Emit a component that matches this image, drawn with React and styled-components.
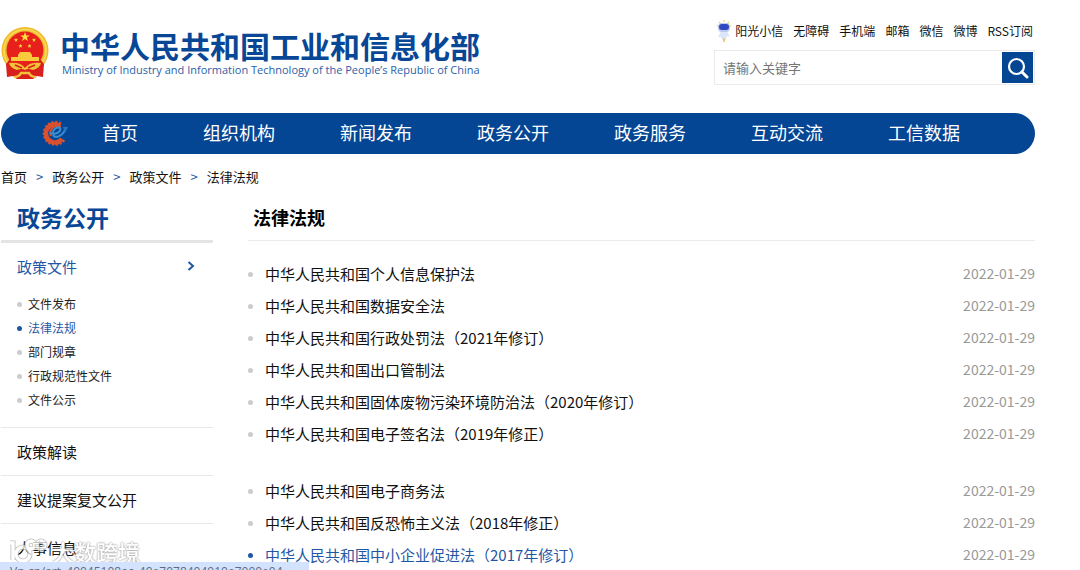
import React from 'react'
import styled, { createGlobalStyle } from 'styled-components';


const topLinks = ['无障碍', '手机端', '邮箱', '微信', '微博', 'RSS订阅'];
const navItems = ['首页', '组织机构', '新闻发布', '政务公开', '政务服务', '互动交流', '工信数据'];
const crumbs = ['首页', '政务公开', '政策文件', '法律法规'];
const subMenu = ['文件发布', '法律法规', '部门规章', '行政规范性文件', '文件公示'];
const sideMenu = ['政策解读', '建议提案复文公开', '人事信息'];

const lawGroups = [
    [
        '中华人民共和国个人信息保护法',
        '中华人民共和国数据安全法',
        '中华人民共和国行政处罚法（2021年修订）',
        '中华人民共和国出口管制法',
        '中华人民共和国固体废物污染环境防治法（2020年修订）',
        '中华人民共和国电子签名法（2019年修正）',
    ],
    [
        '中华人民共和国电子商务法',
        '中华人民共和国反恐怖主义法（2018年修正）',
        '中华人民共和国中小企业促进法（2017年修订）',
    ],
];
const activeLaw = '中华人民共和国中小企业促进法（2017年修订）';

const star = (cx, cy, r) => {
    const pts = [];
    for (let i = 0; i < 10; i++) {
        const a = (Math.PI / 5) * i - Math.PI / 2;
        const d = i % 2 ? r * 0.4 : r;
        pts.push(`${cx + d * Math.cos(a)},${cy + d * Math.sin(a)}`);
    }
    return pts.join(' ');
};

const Emblem = () => (
    <svg width="48" height="53" viewBox="0 0 48 53" aria-hidden="true">
        <circle cx="24" cy="23.5" r="23.5" fill="#eebb2c" />
        <circle cx="24" cy="23.5" r="21" fill="none" stroke="#f8d654" strokeWidth="2" />
        <path d="M5 37 L9 32 H39 L43 37 L42 50 L36 49 L32 52 H16 L12 49 L6 50 Z" fill="#d8201c" />
        <circle cx="24" cy="23" r="18.5" fill="#e8201c" />
        <polygon points={star(24, 10, 5)} fill="#ffdf3d" />
        <polygon points={star(15, 13, 2.2)} fill="#ffdf3d" />
        <polygon points={star(33, 13, 2.2)} fill="#ffdf3d" />
        <polygon points={star(19.5, 19, 2.2)} fill="#ffdf3d" />
        <polygon points={star(28.5, 19, 2.2)} fill="#ffdf3d" />
        <path d="M17 28 L19 25 H29 L31 28 V30 H38 V34 H10 V30 H17 Z" fill="#f7cb3c" />
        <path d="M8 36 Q20 35 24 41 Q28 35 40 36 Q39 41 32 43 Q27 41 24 43 Q21 41 16 43 Q9 41 8 36 Z" fill="#f4c238" />
        <path d="M14 38 L21 41 M34 38 L27 41" stroke="#d8201c" strokeWidth="1.6" />
        <path d="M13 50 Q18 50 20 46 H28 Q30 50 35 50" fill="none" stroke="#f4c238" strokeWidth="2.4" />
    </svg>
);

const GearLogo = () => (
    <svg width="28" height="28" viewBox="0 0 28 28" aria-hidden="true">
        <path d="M23 21 A11 11 0 1 1 20 5" fill="none" stroke="#d9502f" strokeWidth="3" strokeDasharray="2.2 1.5" />
        <path d="M21 20 A9 9 0 1 1 19 7" fill="none" stroke="#d9502f" strokeWidth="4.5" />
        <path d="M20 8 C14 4 7 11 10 17" fill="none" stroke="#d9502f" strokeWidth="2" />
        <path d="M9 14 C14 16 21 13 19 9 C16 7 11 11 12 15 C13 21 23 17 25 8" fill="none" stroke="#3a8ed0" strokeWidth="2" />
        <path d="M22 8 L27 8 L24 14 Z" fill="#2674c4" />
    </svg>
);

const Robot = () => (
    <svg width="14" height="22" viewBox="0 0 14 22" aria-hidden="true">
        <path d="M2 2 L4 4 M7 0 V2 M12 2 L10 4 M0 6 H2 M12 6 H14" stroke="#f5d778" strokeWidth="1.4" />
        <path d="M4 11 H10 L13 17 L10 16 L9 20 H5 L4 17 L1 17 Z" fill="#dbe6f8" />
        <rect x="1" y="3" width="12" height="9" rx="4" fill="#b9c8f2" />
        <rect x="2" y="4" width="10" height="6" rx="3" fill="#3048c0" />
        <path d="M7 18 V22" stroke="#f3c988" strokeWidth="2" />
    </svg>
);

const WatermarkLogo = () => (
    <svg width="40" height="26" viewBox="0 0 40 26" fill="none" aria-hidden="true">
        <g stroke="#a8a8a8" strokeWidth="5">
            <path d="M2 5 H5 V22" />
            <circle cx="15" cy="16" r="7" />
            <circle cx="23" cy="7" r="4" />
            <circle cx="33" cy="7" r="4" />
        </g>
        <g stroke="#fff" strokeWidth="3.4">
            <path d="M2 5 H5 V22" />
            <circle cx="15" cy="16" r="7" />
            <circle cx="23" cy="7" r="4" />
            <circle cx="33" cy="7" r="4" />
        </g>
    </svg>
);


const App = () => {

    return (
        <>
            <GlobalStyle />
            <PageLayout>
                <HeaderLayout>
                    <Brand href="#">
                        <Emblem />
                        <BrandText>
                            <BrandName>中华人民共和国工业和信息化部</BrandName>
                            <BrandSub>Ministry of Industry and Information Technology of the People’s Republic of China</BrandSub>
                        </BrandText>
                    </Brand>

                    <HeaderSide>
                        <TopLinks>
                            <TopLink href="#"><Robot />阳光小信</TopLink>
                            {topLinks.map((text) => (
                                <TopLink href="#" key={text}>{text}</TopLink>
                            ))}
                        </TopLinks>
                        <SearchForm onSubmit={(e) => e.preventDefault()}>
                            <SearchInput type="text" placeholder="请输入关键字" aria-label="请输入关键字" />
                            <SearchButton type="submit" aria-label="搜索">
                                <svg width="22" height="22" viewBox="0 0 22 22" fill="none" stroke="#fff" strokeWidth="2.2">
                                    <circle cx="9.5" cy="9.5" r="7.5" />
                                    <path d="M15 15 L20 20" strokeWidth="3" strokeLinecap="round" />
                                </svg>
                            </SearchButton>
                        </SearchForm>
                    </HeaderSide>
                </HeaderLayout>

                <NavBar>
                    <GearLogo />
                    <NavList>
                        {navItems.map((text) => (
                            <NavLink href="#" key={text}>{text}</NavLink>
                        ))}
                    </NavList>
                </NavBar>

                <Breadcrumb>
                    {crumbs.map((text, i) => (
                        <React.Fragment key={text}>
                            {i > 0 && <CrumbMark>&gt;</CrumbMark>}
                            <a href="#">{text}</a>
                        </React.Fragment>
                    ))}
                </Breadcrumb>

                <ContentWrap>
                    <Sidebar>
                        <SideTitle>政务公开</SideTitle>
                        <SideOpen href="#">
                            政策文件
                            <svg width="8" height="10" viewBox="0 0 8 10" fill="none" stroke="#1f57a4" strokeWidth="2">
                                <path d="M1.5 1 L6 5 L1.5 9" />
                            </svg>
                        </SideOpen>
                        <SubList>
                            {subMenu.map((text) => (
                                <SubItem key={text} $active={text === '法律法规'}>
                                    <a href="#">{text}</a>
                                </SubItem>
                            ))}
                        </SubList>
                        {sideMenu.map((text) => (
                            <SideItem href="#" key={text}>{text}</SideItem>
                        ))}
                    </Sidebar>

                    <Main>
                        <MainTitle>法律法规</MainTitle>
                        <LawGroups>
                            {lawGroups.map((group) => (
                                <LawList key={group[0]}>
                                    {group.map((law) => (
                                        <LawItem key={law} $active={law === activeLaw}>
                                            <a href="#">{law}</a>
                                            <LawDate>2022-01-29</LawDate>
                                        </LawItem>
                                    ))}
                                </LawList>
                            ))}
                        </LawGroups>
                    </Main>
                </ContentWrap>
            </PageLayout>

            <Watermark>
                <WatermarkLogo />
                大数跨境
            </Watermark>
            <StatusBar>Vn.cn/art_49045108ac_49e7078404910e7000e04</StatusBar>
        </>
    )

}
export default App;


const GlobalStyle = createGlobalStyle`
    * {
        box-sizing: border-box;
    }
    html {
        scrollbar-width: none;
    }
    body {
        margin: 0;
        background: #fff;
        color: #111;
        font-family: "Noto Sans CJK SC", sans-serif;
    }
    a {
        color: inherit;
        text-decoration: none;
    }
    svg {
        flex: none;
    }
`;

const PageLayout = styled.div`
    padding: 0 45px 0 1px;
`;

const HeaderLayout = styled.header`
    display: flex;
    justify-content: space-between;
    height: 113px;
`;

const Brand = styled.a`
    display: flex;
    align-items: flex-start;
    gap: 11px;
    padding-top: 27px;
    color: #084696;
`;

const BrandText = styled.div`
    padding-top: 2px;
    white-space: nowrap;
`;

const BrandName = styled.div`
    font-size: 30px;
    line-height: 33px;
    font-weight: 700;
`;

const BrandSub = styled.div`
    padding-left: 2px;
    color: #2a5fa8;
    font-family: "Open Sans", sans-serif;
    font-size: 11px;
    line-height: 16px;
    font-weight: 500;
`;

const HeaderSide = styled.div`
    width: 321px;
    padding-top: 20px;
`;

const TopLinks = styled.div`
    display: flex;
    justify-content: flex-end;
    gap: 10px;
    height: 22px;
    padding-right: 2px;
`;

const TopLink = styled.a`
    display: flex;
    align-items: center;
    gap: 4px;
    font-size: 12px;
    line-height: 22px;
    white-space: nowrap;
`;

const SearchForm = styled.form`
    display: flex;
    height: 35px;
    margin-top: 8px;
    padding: 1px;
    border: 1px solid #ebebeb;
`;

const SearchInput = styled.input`
    flex: 1;
    min-width: 0;
    padding: 0 7px;
    border: none;
    outline: none;
    font-family: inherit;
    font-size: 13px;

    &::placeholder {
        color: #757575;
    }
`;

const SearchButton = styled.button`
    display: flex;
    align-items: center;
    justify-content: center;
    width: 31px;
    height: 31px;
    padding: 0;
    border: none;
    background: #044694;
`;

const NavBar = styled.nav`
    display: flex;
    align-items: center;
    height: 41px;
    padding: 0 0 2px 40px;
    border-radius: 21px;
    background: #044694;
    color: #fff;
`;

const NavList = styled.div`
    display: flex;
    gap: 65px;
    padding-left: 33px;
`;

const NavLink = styled.a`
    font-size: 18px;
    line-height: 39px;
    white-space: nowrap;
`;

const Breadcrumb = styled.div`
    display: flex;
    gap: 9px;
    padding-top: 13px;
    font-size: 13px;
    line-height: 20px;
`;

const CrumbMark = styled.span`
    color: #1f57a4;
`;

const ContentWrap = styled.div`
    display: flex;
    gap: 35px;
    padding-top: 11px;
`;

const Sidebar = styled.aside`
    flex: none;
    width: 212px;
`;

const SideTitle = styled.h2`
    height: 45px;
    margin: 0;
    padding-left: 16px;
    border-bottom: 3px solid #e4e4e4;
    color: #084696;
    font-size: 23px;
    line-height: 38px;
`;

const SideOpen = styled.a`
    display: flex;
    align-items: center;
    justify-content: space-between;
    height: 46px;
    padding: 0 18px 0 16px;
    color: #1f57a4;
    font-size: 15px;
`;

const SubList = styled.ul`
    margin: 0;
    padding: 3px 0 15px 16px;
    list-style: none;
`;

const SubItem = styled.li`
    display: flex;
    align-items: center;
    gap: 6px;
    color: ${(props) => (props.$active ? '#1f57a4' : '#222')};
    font-size: 12px;
    line-height: 24px;

    &::before {
        content: '';
        width: 5px;
        height: 5px;
        border-radius: 50%;
        background: ${(props) => (props.$active ? '#1f57a4' : '#ccc')};
    }
`;

const SideItem = styled.a`
    display: block;
    height: 48px;
    padding-left: 16px;
    border-top: 1px solid #e8e8e8;
    font-size: 15px;
    line-height: 48px;
`;

const Main = styled.main`
    flex: 1;
    min-width: 0;
`;

const MainTitle = styled.h1`
    height: 43px;
    margin: 0;
    padding-left: 5px;
    border-bottom: 1px solid #ebebeb;
    color: #000;
    font-size: 18px;
    line-height: 38px;
`;

const LawGroups = styled.div`
    display: flex;
    flex-direction: column;
    gap: 25px;
    padding-top: 17px;
`;

const LawList = styled.ul`
    margin: 0;
    padding: 0;
    list-style: none;
`;

const LawItem = styled.li`
    display: flex;
    align-items: flex-start;
    color: ${(props) => (props.$active ? '#1f57a4' : '#111')};
    font-size: 15px;
    line-height: 32px;

    &::before {
        content: '';
        align-self: center;
        width: 5px;
        height: 5px;
        margin-right: 12px;
        border-radius: 50%;
        background: ${(props) => (props.$active ? '#1f57a4' : '#ccc')};
    }
`;

const LawDate = styled.span`
    margin-left: auto;
    color: #999;
    font-size: 14px;
    line-height: 30px;
`;

const StatusBar = styled.div`
    position: fixed;
    left: 0;
    bottom: 0;
    width: 309px;
    height: 8px;
    padding-left: 10px;
    overflow: hidden;
    background: #d3e3fd;
    color: #5f6b80;
    font-family: "Open Sans", sans-serif;
    font-size: 12px;
    line-height: 19px;
    white-space: nowrap;
`;

const Watermark = styled.div`
    position: fixed;
    left: 8px;
    bottom: 4px;
    display: flex;
    align-items: center;
    gap: 4px;
    color: #fff;
    font-size: 22px;
    font-weight: 500;
    line-height: 30px;
    text-shadow: 0 0 2px #888, 0 0 2px #888;
    opacity: 0.75;
`;
